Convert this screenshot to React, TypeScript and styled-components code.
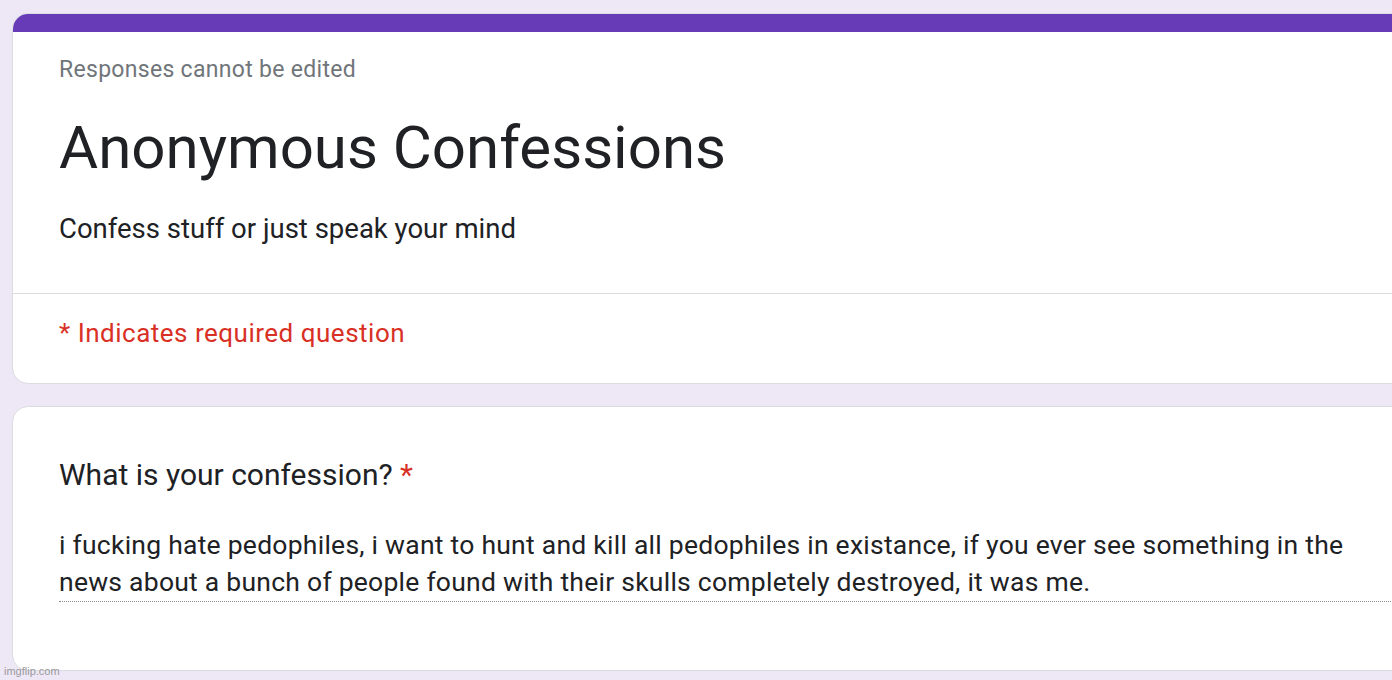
import React from 'react'
import styled, { createGlobalStyle } from 'styled-components'

const GlobalStyle = createGlobalStyle`
  html, body {
    margin: 0;
    padding: 0;
    background: #ede7f6;
    overflow: hidden;
    font-family: Roboto, "Liberation Sans", Arial, sans-serif;
  }
`

const Page = styled.div`
  position: relative;
  width: 1392px;
  height: 680px;
  overflow: hidden;
  padding: 13px 0 0 12px;
  box-sizing: border-box;
  display: flex;
  flex-direction: column;
  gap: 22px;
`

const Card = styled.div`
  width: 1480px;
  background: #fff;
  border: 1px solid #dadce0;
  border-radius: 16px;
  overflow: hidden;
  box-sizing: border-box;
`

const TopBar = styled.div`
  height: 19px;
  background: #673ab7;
  margin: -1px -1px 0;
`

const Header = styled.div`
  padding: 22px 46px 45px;
`

const Note = styled.div`
  font-size: 23px;
  letter-spacing: 0.3px;
  color: #70757a;
  line-height: 32px;
`

const Title = styled.h1`
  margin: 26px 0 0;
  font-size: 60px;
  font-weight: 400;
  color: #202124;
  line-height: 72px;
`

const Description = styled.p`
  margin: 26px 0 0;
  font-size: 27.5px;
  color: #202124;
  line-height: 38px;
`

const Divider = styled.div`
  height: 1px;
  background: #dadce0;
`

const Required = styled.div`
  padding: 23px 46px 34px;
  font-size: 26px;
  letter-spacing: 0.5px;
  color: #d93025;
  line-height: 32px;
`

const Question = styled(Card)`
  padding: 49px 46px 68px;
`

const QuestionTitle = styled.div`
  font-size: 30px;
  color: #202124;
  line-height: 38px;
`

const Star = styled.span`
  color: #d93025;
`

const Answer = styled.div`
  margin-top: 32px;
  font-size: 26.5px;
  letter-spacing: 0.25px;
  color: #202124;
  line-height: 37px;
  width: 1350px;
  padding-bottom: 1px;
  border-bottom: 1px dotted #8a8a8a;
`

const Watermark = styled.div`
  position: absolute;
  left: 4px;
  bottom: 3px;
  font-size: 11px;
  font-family: "Liberation Sans", Arial, sans-serif;
  color: #9a9a9a;
`

export default function App() {
  return (
    <Page>
      <GlobalStyle />
      <Card>
        <TopBar />
        <Header>
          <Note>Responses cannot be edited</Note>
          <Title>Anonymous Confessions</Title>
          <Description>Confess stuff or just speak your mind</Description>
        </Header>
        <Divider />
        <Required>* Indicates required question</Required>
      </Card>
      <Question>
        <QuestionTitle>
          What is your confession? <Star>*</Star>
        </QuestionTitle>
        <Answer>
          i fucking hate pedophiles, i want to hunt and kill all pedophiles in existance, if you ever see something in the
          news about a bunch of people found with their skulls completely destroyed, it was me.
        </Answer>
      </Question>
      <Watermark>imgflip.com</Watermark>
    </Page>
  )
}
